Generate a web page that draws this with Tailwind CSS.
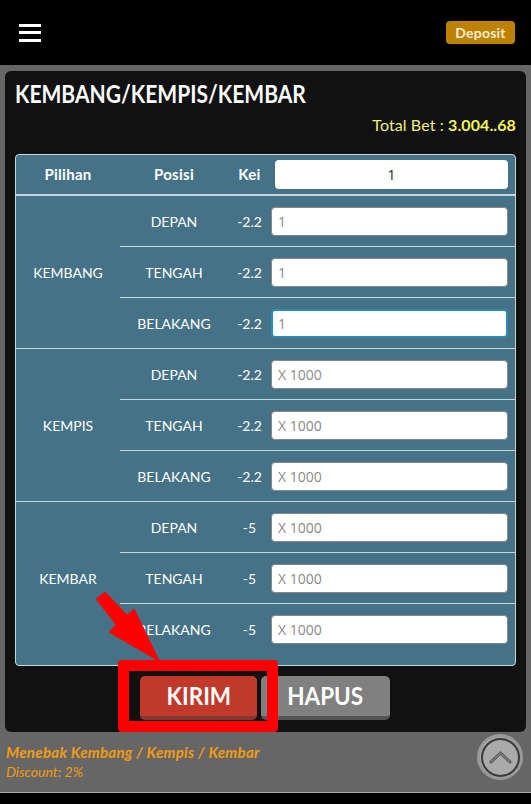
<!DOCTYPE html>
<html lang="en">

<head>
  <meta charset="UTF-8">
  <meta name="viewport" content="width=device-width, initial-scale=1.0">
  <title>Kembang/Kempis/Kembar</title>
  <script src="https://cdn.jsdelivr.net/npm/@tailwindcss/browser@4"></script>
</head>

<body class="bg-black font-['Lato','Liberation_Sans',sans-serif] h-[804px] w-[531px] overflow-hidden">
  <!-- Top bar -->
  <header class="h-[65px] bg-black flex items-center justify-between pl-[19px] pr-[16px]">
    <div class="flex flex-col gap-[4.5px] w-[22px]">
      <span class="h-[3px] bg-white"></span>
      <span class="h-[3px] bg-white"></span>
      <span class="h-[3px] bg-white"></span>
    </div>
    <a class="w-[69px] h-[23px] rounded bg-[#bd8203] text-[#fbeed2] text-[14px] font-bold flex items-center justify-center tracking-[0.2px]">Deposit</a>
  </header>

  <main class="relative bg-[#666666] h-[728px] border-b border-[#aaaaaa] pt-[6px]">
    <!-- Card -->
    <section class="mx-[5px] h-[661px] bg-[#111111] rounded-[6px] px-[10px] pt-[8px]">
      <h1 class="text-white text-[24px] leading-[30px] font-bold"><span class="inline-block origin-left scale-x-[0.876]">KEMBANG/KEMPIS/KEMBAR</span></h1>
      <p class="text-right text-[#eef07a] text-[16px] leading-[20px] mt-[6px] tracking-[0.1px]">Total Bet : <b class="text-[#f6f65c] font-bold">3.004..68</b></p>

      <!-- Table -->
      <div class="mt-[19px] pb-[11px] bg-[#457287] border border-[#c5d6dd] rounded-[4px] text-white text-[14px]">
        <div class="flex items-center h-[39px] font-bold text-[15px] tracking-[0.3px]">
          <div class="w-[104px] text-center">Pilihan</div>
          <div class="w-[108px] text-center">Posisi</div>
          <div class="w-[43px] text-center">Kei</div>
          <div class="ml-[4px] w-[233px] h-[29px] rounded bg-white text-[#222222] font-['Open_Sans',sans-serif] font-normal tracking-normal text-[14px] flex items-center justify-center">1</div>
        </div>

        <div class="flex border-t-2 border-[#c5d6dd]">
          <div class="w-[104px] flex items-center justify-center">KEMBANG</div>
          <div class="flex-1">
            <div class="flex items-center h-[50px]">
              <div class="w-[108px] text-center">DEPAN</div>
              <div class="w-[43px] text-center">-2.2</div>
              <div class="w-[237px] h-[29px] rounded bg-white border border-[#888888] text-[#8a8a8a] font-['Open_Sans',sans-serif] text-[14px] flex items-center pl-[6px]">1</div>
            </div>
            <div class="flex items-center h-[51px] border-t border-[#c5d6dd]">
              <div class="w-[108px] text-center">TENGAH</div>
              <div class="w-[43px] text-center">-2.2</div>
              <div class="w-[237px] h-[29px] rounded bg-white border border-[#888888] text-[#8a8a8a] font-['Open_Sans',sans-serif] text-[14px] flex items-center pl-[6px]">1</div>
            </div>
            <div class="flex items-center h-[51px] border-t border-[#c5d6dd]">
              <div class="w-[108px] text-center">BELAKANG</div>
              <div class="w-[43px] text-center">-2.2</div>
              <div class="w-[237px] h-[29px] rounded bg-white border-2 border-[#2b8cb8] text-[#8a8a8a] font-['Open_Sans',sans-serif] text-[14px] flex items-center pl-[5px]">1</div>
            </div>
          </div>
        </div>

        <div class="flex border-t border-[#c5d6dd]">
          <div class="w-[104px] flex items-center justify-center">KEMPIS</div>
          <div class="flex-1">
            <div class="flex items-center h-[50px]">
              <div class="w-[108px] text-center">DEPAN</div>
              <div class="w-[43px] text-center">-2.2</div>
              <div class="w-[237px] h-[29px] rounded bg-white border border-[#888888] text-[#8a8a8a] font-['Open_Sans',sans-serif] text-[14px] flex items-center pl-[6px]">X 1000</div>
            </div>
            <div class="flex items-center h-[51px] border-t border-[#c5d6dd]">
              <div class="w-[108px] text-center">TENGAH</div>
              <div class="w-[43px] text-center">-2.2</div>
              <div class="w-[237px] h-[29px] rounded bg-white border border-[#888888] text-[#8a8a8a] font-['Open_Sans',sans-serif] text-[14px] flex items-center pl-[6px]">X 1000</div>
            </div>
            <div class="flex items-center h-[51px] border-t border-[#c5d6dd]">
              <div class="w-[108px] text-center">BELAKANG</div>
              <div class="w-[43px] text-center">-2.2</div>
              <div class="w-[237px] h-[29px] rounded bg-white border border-[#888888] text-[#8a8a8a] font-['Open_Sans',sans-serif] text-[14px] flex items-center pl-[6px]">X 1000</div>
            </div>
          </div>
        </div>

        <div class="flex border-t border-[#c5d6dd]">
          <div class="w-[104px] flex items-center justify-center">KEMBAR</div>
          <div class="flex-1">
            <div class="flex items-center h-[50px]">
              <div class="w-[108px] text-center">DEPAN</div>
              <div class="w-[43px] text-center">-5</div>
              <div class="w-[237px] h-[29px] rounded bg-white border border-[#888888] text-[#8a8a8a] font-['Open_Sans',sans-serif] text-[14px] flex items-center pl-[6px]">X 1000</div>
            </div>
            <div class="flex items-center h-[51px] border-t border-[#c5d6dd]">
              <div class="w-[108px] text-center">TENGAH</div>
              <div class="w-[43px] text-center">-5</div>
              <div class="w-[237px] h-[29px] rounded bg-white border border-[#888888] text-[#8a8a8a] font-['Open_Sans',sans-serif] text-[14px] flex items-center pl-[6px]">X 1000</div>
            </div>
            <div class="flex items-center h-[51px] border-t border-[#c5d6dd]">
              <div class="w-[108px] text-center">BELAKANG</div>
              <div class="w-[43px] text-center">-5</div>
              <div class="w-[237px] h-[29px] rounded bg-white border border-[#888888] text-[#8a8a8a] font-['Open_Sans',sans-serif] text-[14px] flex items-center pl-[6px]">X 1000</div>
            </div>
          </div>
        </div>
      </div>

      <!-- Buttons -->
      <div class="flex gap-[4px] mt-[10px] pl-[125px]">
        <button class="w-[117px] h-[44px] rounded-[5px] bg-[#c0392b] border-b-4 border-[#7f3a33] text-white text-[25px] font-bold"><span class="inline-block scale-x-[0.9]">KIRIM</span></button>
        <button class="w-[129px] h-[44px] rounded-[5px] bg-[#808080] border-b-4 border-[#555555] text-white text-[25px] font-bold"><span class="inline-block scale-x-[0.9]">HAPUS</span></button>
      </div>
    </section>

    <!-- Footer -->
    <div class="pl-[6px] pt-[10px] italic text-[#f39c12] text-[14px] leading-[20px]">
      <p class="font-bold text-[15px] tracking-[0.3px]">Menebak Kembang / Kempis / Kembar</p>
      <p>Discount: 2%</p>
    </div>

    <!-- Back to top -->
    <div class="absolute left-[477px] top-[669px] w-[46px] h-[46px] rounded-full bg-[#aaaaaa] border-[3px] border-[#999999] flex items-center justify-center">
      <div class="w-[39px] h-[39px] rounded-full border-2 border-[#3a3a3a] flex items-center justify-center">
        <svg width="23" height="14" viewBox="0 0 23 14" fill="none" stroke-linecap="round"><path d="M2 12 11.5 3 21 12" stroke="#555555" stroke-width="3"/><path d="M2 12 11.5 3 21 12" stroke="#999999" stroke-width="1"/></svg>
      </div>
    </div>
  </main>

  <!-- Red annotation -->
  <div class="absolute left-[118px] top-[660px] w-[160px] h-[72px] border-[11px] border-[#ff0000] rounded-[4px]"></div>
  <svg class="absolute left-[90px] top-[588px]" width="75" height="76" viewBox="0 0 75 76" fill="#ff0000">
    <path d="M7 11 15 5 37 28 44 22 68 72 20 44 27 37Z" stroke="#ff0000" stroke-linejoin="round" stroke-width="2"/>
  </svg>
</body>

</html>
